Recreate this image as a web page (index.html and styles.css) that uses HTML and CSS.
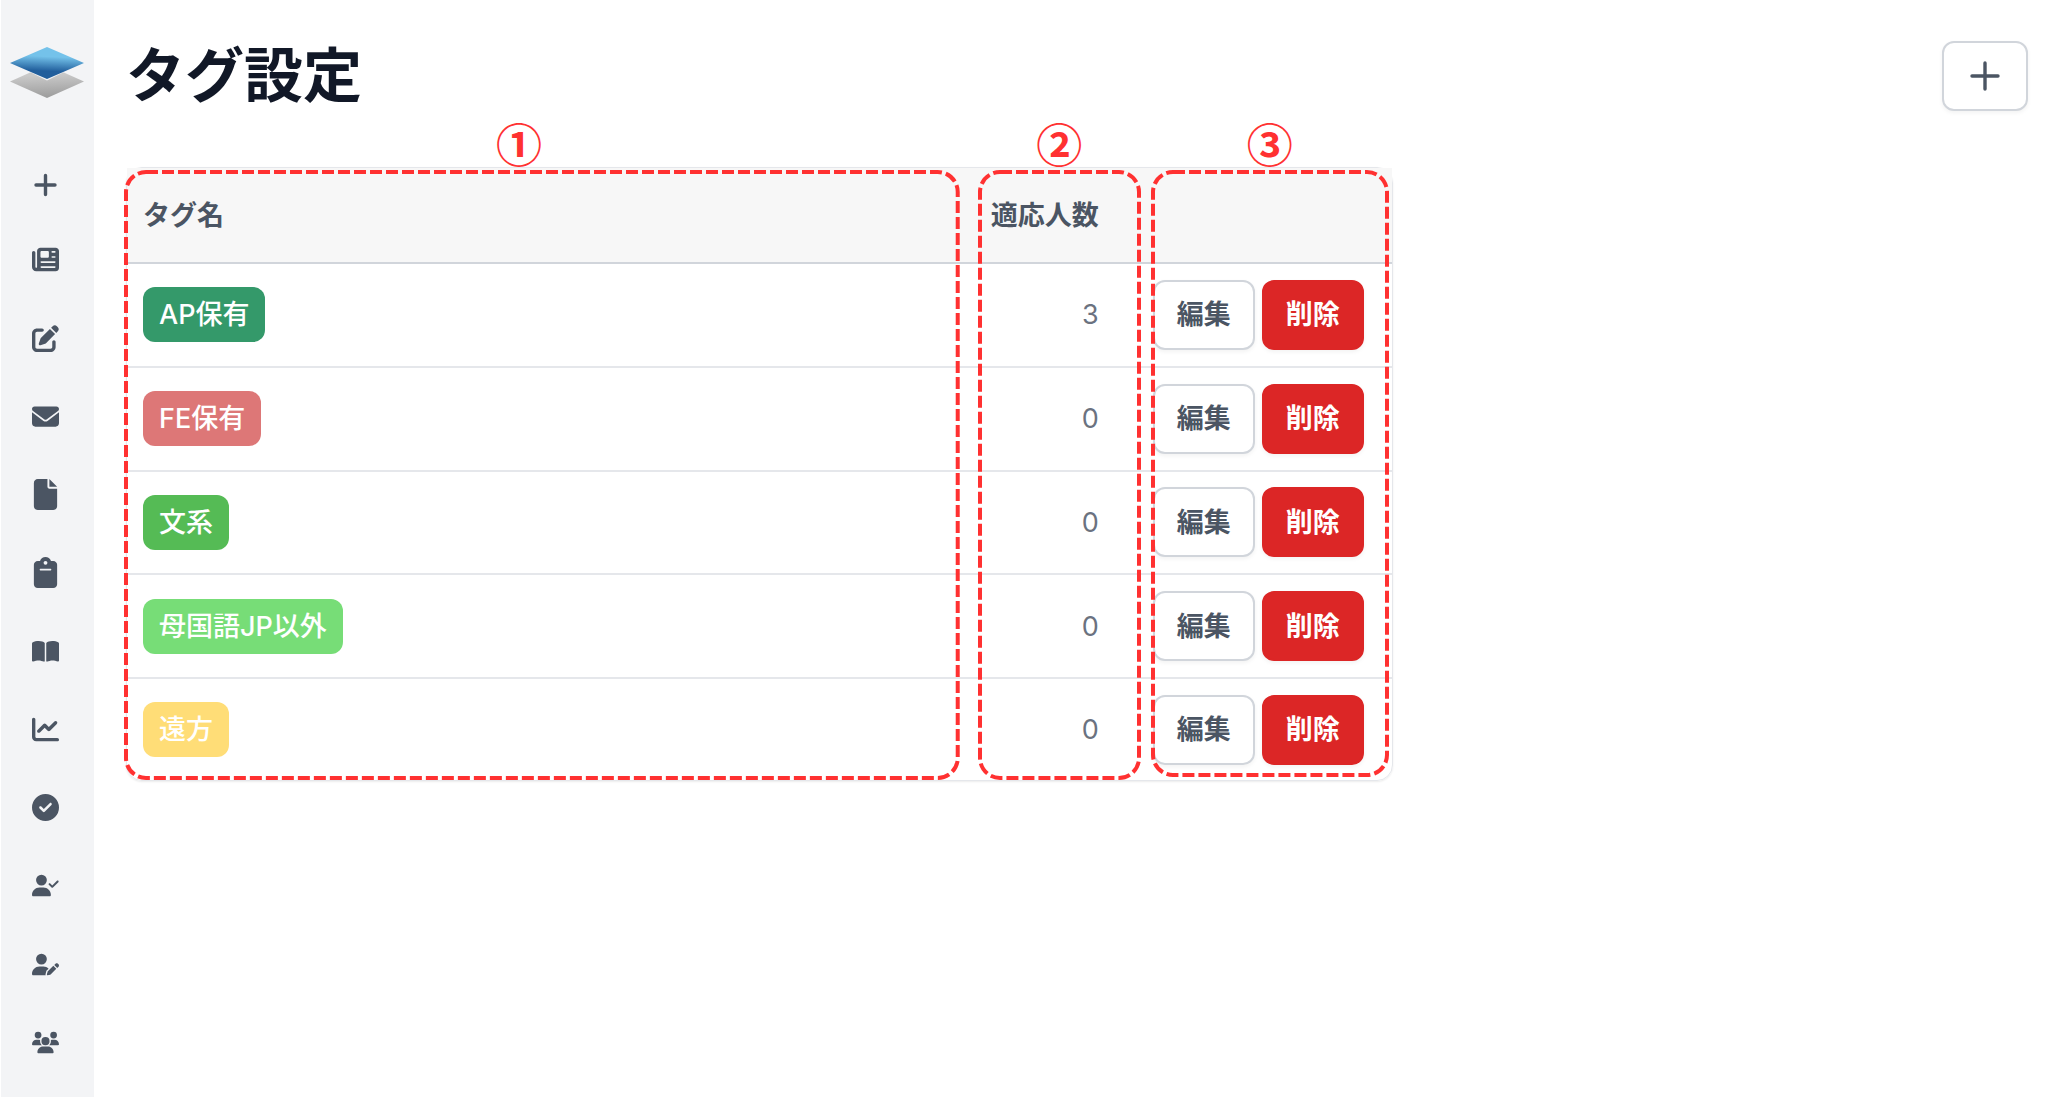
FILE: index.html
```html
<!DOCTYPE html>
<html lang="ja">
<head>
<meta charset="utf-8">
<title>タグ設定</title>
<link rel="stylesheet" href="styles.css">
</head>
<body>
<div class="app">
  <aside class="sidebar">
    <a class="logo" href="#" aria-label="ホーム">
      <svg viewBox="0 0 74 51" width="74" height="51">
        <defs>
          <linearGradient id="blue" x1="0.55" y1="0" x2="0.45" y2="1">
            <stop offset="0.3" stop-color="#74c2ea"/><stop offset="0.75" stop-color="#215e9c"/>
          </linearGradient>
          <linearGradient id="gray" x1="0.45" y1="0" x2="0.55" y2="1">
            <stop offset="0.3" stop-color="#c9c9c9"/><stop offset="1" stop-color="#9b9b9b"/>
          </linearGradient>
        </defs>
        <path fill="url(#gray)" d="M0 34.5 37 18 74 34.5 37 51z"/>
        <path fill="#f3f4f6" d="M10 20 37 33.500 64 20 50 12H24z"/>
        <path fill="url(#blue)" d="M0 16 37 0 74 16 37 32z"/>
      </svg>
    </a>
    <nav class="nav" aria-label="メニュー">
      <a href="#" class="nav-add" aria-label="追加"><svg viewBox="0 0 27 24"><path d="M13.500 2.500v19M4 12h19" fill="none" stroke="currentColor" stroke-width="3.400" stroke-linecap="round"/></svg></a>
      <a href="#" aria-label="ニュース"><svg viewBox="0 0 512 512"><path d="M96 96c0-35.3 28.700-64 64-64H448c35.300 0 64 28.700 64 64V416c0 35.300-28.700 64-64 64H80c-44.200 0-80-35.800-80-80V128c0-17.700 14.300-32 32-32s32 14.300 32 32V400c0 8.800 7.200 16 16 16s16-7.200 16-16V96zm64 24v80c0 13.300 10.700 24 24 24H296c13.300 0 24-10.700 24-24V120c0-13.300-10.700-24-24-24H184c-13.300 0-24 10.700-24 24zm208-8c0 8.800 7.200 16 16 16h48c8.800 0 16-7.200 16-16s-7.200-16-16-16H384c-8.800 0-16 7.200-16 16zm0 96c0 8.800 7.200 16 16 16h48c8.800 0 16-7.200 16-16s-7.200-16-16-16H384c-8.800 0-16 7.200-16 16zM160 304c0 8.800 7.200 16 16 16H432c8.800 0 16-7.200 16-16s-7.200-16-16-16H176c-8.800 0-16 7.200-16 16zm0 96c0 8.800 7.200 16 16 16H432c8.800 0 16-7.200 16-16s-7.200-16-16-16H176c-8.800 0-16 7.200-16 16z"/></svg></a>
      <a href="#" aria-label="編集"><svg viewBox="0 0 512 512"><path d="M471.6 21.7c-21.9-21.9-57.3-21.9-79.2 0L362.3 51.7l97.9 97.9 30.1-30.1c21.9-21.9 21.9-57.3 0-79.2L471.6 21.7zm-299.2 220c-6.1 6.1-10.8 13.6-13.5 21.9l-29.6 88.8c-2.9 8.6-.6 18.1 5.8 24.6s15.9 8.7 24.6 5.8l88.8-29.6c8.2-2.7 15.7-7.4 21.9-13.5L437.7 172.3 339.7 74.3 172.4 241.7zM96 64C43 64 0 107 0 160V416c0 53 43 96 96 96H352c53 0 96-43 96-96V320c0-17.7-14.3-32-32-32s-32 14.3-32 32v96c0 17.7-14.3 32-32 32H96c-17.7 0-32-14.3-32-32V160c0-17.7 14.3-32 32-32h96c17.7 0 32-14.3 32-32s-14.3-32-32-32H96z"/></svg></a>
      <a href="#" aria-label="メール"><svg viewBox="0 0 512 512"><path d="M48 64C21.5 64 0 85.5 0 112c0 15.1 7.1 29.3 19.2 38.4L236.8 313.6c11.4 8.5 27 8.5 38.4 0L492.8 150.4c12.1-9.1 19.2-23.3 19.2-38.4c0-26.5-21.5-48-48-48H48zM0 176V384c0 35.3 28.7 64 64 64H448c35.3 0 64-28.7 64-64V176L294.4 339.2c-22.8 17.1-54 17.1-76.8 0L0 176z"/></svg></a>
      <a href="#" aria-label="ファイル"><svg viewBox="0 0 384 512"><path d="M0 64C0 28.7 28.7 0 64 0H224V128c0 17.7 14.3 32 32 32H384V448c0 35.3-28.7 64-64 64H64c-35.3 0-64-28.7-64-64V64zm384 64H256V0L384 128z"/></svg></a>
      <a href="#" aria-label="クリップボード"><svg viewBox="0 0 384 512"><path d="M192 0c-41.8 0-77.4 26.7-90.5 64H64C28.7 64 0 92.7 0 128V448c0 35.3 28.7 64 64 64H320c35.3 0 64-28.7 64-64V128c0-35.3-28.7-64-64-64H282.5C269.4 26.7 233.8 0 192 0zm0 64a32 32 0 1 1 0 64 32 32 0 1 1 0-64zM112 192H272c8.8 0 16 7.2 16 16s-7.2 16-16 16H112c-8.8 0-16-7.2-16-16s7.2-16 16-16z"/></svg></a>
      <a href="#" aria-label="ブック"><svg viewBox="0 0 576 512"><path d="M249.6 471.5c10.8 3.8 22.4-4.1 22.4-15.5V78.6c0-4.2-1.6-8.4-5-11C247.4 52 202.4 32 144 32C93.5 32 46.3 45.3 18.1 56.1C6.8 60.5 0 71.7 0 83.8V454.1c0 11.9 12.8 20.2 24.1 16.5C55.6 460.1 105.5 448 144 448c33.9 0 79 14 105.6 23.5zm76.8 0C353 462 398.1 448 432 448c38.5 0 88.4 12.1 119.9 22.6c11.3 3.8 24.1-4.6 24.1-16.5V83.8c0-12.1-6.8-23.3-18.1-27.6C529.7 45.3 482.5 32 432 32c-58.4 0-103.4 20-123 35.6c-3.3 2.6-5 6.8-5 11V456c0 11.4 11.7 19.3 22.4 15.5z"/></svg></a>
      <a href="#" aria-label="グラフ"><svg viewBox="0 0 512 512"><path d="M64 64c0-17.7-14.3-32-32-32S0 46.3 0 64V400c0 44.2 35.8 80 80 80H480c17.7 0 32-14.3 32-32s-14.3-32-32-32H80c-8.8 0-16-7.2-16-16V64zm406.6 86.6c12.5-12.5 12.5-32.8 0-45.3s-32.8-12.5-45.3 0L320 210.7l-57.4-57.4c-12.5-12.5-32.8-12.5-45.3 0l-112 112c-12.5 12.5-12.5 32.8 0 45.3s32.8 12.5 45.3 0L240 221.3l57.4 57.4c12.5 12.5 32.8 12.5 45.3 0l128-128z"/></svg></a>
      <a href="#" aria-label="完了"><svg viewBox="0 0 512 512"><path d="M256 512A256 256 0 1 0 256 0a256 256 0 1 0 0 512zM369 209L241 337c-9.4 9.4-24.6 9.4-33.9 0l-64-64c-9.4-9.4-9.4-24.6 0-33.9s24.6-9.4 33.9 0l47 47L335 175c9.4-9.4 24.6-9.4 33.9 0s9.4 24.6 0 33.9z"/></svg></a>
      <a href="#" aria-label="ユーザー確認"><svg viewBox="0 0 640 512"><path d="M96 128a128 128 0 1 1 256 0A128 128 0 1 1 96 128zM0 482.3C0 383.8 79.8 304 178.3 304h91.4C368.2 304 448 383.8 448 482.3c0 16.4-13.3 29.7-29.7 29.7H29.7C13.3 512 0 498.7 0 482.3zM625 177L497 305c-9.4 9.4-24.6 9.4-33.9 0l-64-64c-9.4-9.4-9.4-24.6 0-33.9s24.6-9.4 33.9 0l47 47L591 143c9.4-9.4 24.6-9.4 33.9 0s9.4 24.6 0 33.9z"/></svg></a>
      <a href="#" aria-label="ユーザー編集"><svg viewBox="0 0 640 512"><path d="M224 256A128 128 0 1 0 224 0a128 128 0 1 0 0 256zm-45.7 48C79.8 304 0 383.8 0 482.3C0 498.7 13.3 512 29.7 512H322.8c-3.1-8.8-3.7-18.4-1.4-27.8l15-60.1c2.8-11.3 8.6-21.5 16.8-29.7l40.3-40.3c-32.1-31-75.7-50.1-123.9-50.1H178.3zm435.5-68.3c-15.6-15.6-40.9-15.6-56.6 0l-29.4 29.4 71 71 29.4-29.4c15.6-15.6 15.6-40.9 0-56.6l-14.4-14.4zM375.9 417c-4.1 4.1-7 9.2-8.4 14.9l-15 60.1c-1.4 5.5 .2 11.2 4.2 15.2s9.7 5.6 15.2 4.2l60.1-15c5.6-1.4 10.8-4.3 14.9-8.4L576.1 358.7l-71-71L375.9 417z"/></svg></a>
      <a href="#" aria-label="グループ"><svg viewBox="0 0 640 512"><path d="M144 0a80 80 0 1 1 0 160A80 80 0 1 1 144 0zM512 0a80 80 0 1 1 0 160A80 80 0 1 1 512 0zM0 298.7C0 239.8 47.8 192 106.7 192h42.7c15.9 0 31 3.5 44.6 9.7c-1.3 7.2-1.9 14.7-1.9 22.3c0 38.2 16.8 72.5 43.3 96c-.2 0-.4 0-.7 0H21.3C9.6 320 0 310.4 0 298.7zM405.3 320c-.2 0-.4 0-.7 0c26.6-23.5 43.3-57.8 43.3-96c0-7.6-.7-15-1.9-22.3c13.6-6.3 28.7-9.7 44.6-9.7h42.7C592.2 192 640 239.8 640 298.7c0 11.8-9.6 21.3-21.3 21.3H405.3zM224 224a96 96 0 1 1 192 0 96 96 0 1 1 -192 0zM128 485.3C128 411.7 187.7 352 261.3 352H378.7C452.3 352 512 411.7 512 485.3c0 14.7-11.9 26.7-26.7 26.7H154.7c-14.7 0-26.7-11.9-26.7-26.7z"/></svg></a>
    </nav>
  </aside>

  <main class="main">
    <header class="page-head">
      <h1 class="title">タグ設定</h1>
      <button type="button" class="btn btn-add" aria-label="タグを追加"><svg viewBox="0 0 30 30" width="30" height="30"><path d="M15 2v26M2 15h26" fill="none" stroke="currentColor" stroke-width="3.400" stroke-linecap="round"/></svg></button>
    </header>

    <div class="table-wrap">
      <table class="tags">
        <thead>
          <tr><th class="col-name" scope="col">タグ名</th><th class="col-count" scope="col">適応人数</th><td class="col-actions"></td></tr>
        </thead>
        <tbody>
          <tr><td class="col-name"><span class="tag tag-ap">AP保有</span></td><td class="col-count">3</td><td class="col-actions"><div class="actions"><button type="button" class="btn">編集</button><button type="button" class="btn btn-danger">削除</button></div></td></tr>
          <tr><td class="col-name"><span class="tag tag-fe">FE保有</span></td><td class="col-count">0</td><td class="col-actions"><div class="actions"><button type="button" class="btn">編集</button><button type="button" class="btn btn-danger">削除</button></div></td></tr>
          <tr><td class="col-name"><span class="tag tag-arts">文系</span></td><td class="col-count">0</td><td class="col-actions"><div class="actions"><button type="button" class="btn">編集</button><button type="button" class="btn btn-danger">削除</button></div></td></tr>
          <tr><td class="col-name"><span class="tag tag-lang">母国語JP以外</span></td><td class="col-count">0</td><td class="col-actions"><div class="actions"><button type="button" class="btn">編集</button><button type="button" class="btn btn-danger">削除</button></div></td></tr>
          <tr><td class="col-name"><span class="tag tag-far">遠方</span></td><td class="col-count">0</td><td class="col-actions"><div class="actions"><button type="button" class="btn">編集</button><button type="button" class="btn btn-danger">削除</button></div></td></tr>
        </tbody>
      </table>

      <div class="note note-name"><span class="note-num">①</span><svg class="note-box"><rect x="2" y="2" rx="20"/></svg></div>
      <div class="note note-count"><span class="note-num">②</span><svg class="note-box"><rect x="2" y="2" rx="20"/></svg></div>
      <div class="note note-actions"><span class="note-num">③</span><svg class="note-box"><rect x="2" y="2" rx="20"/></svg></div>
    </div>
  </main>
</div>
</body>
</html>
```
FILE: styles.css
```css
* {
  box-sizing: border-box;
}

body {
  margin: 0;
  background: #fff;
  color: #4b5563;
  font-family: Inter, "Noto Sans CJK JP", sans-serif;
  font-size: 27px;
  line-height: 39px;
}

.app {
  display: flex;
  min-height: 100vh;
}

/* Sidebar */
.sidebar {
  display: flex;
  flex-direction: column;
  align-items: center;
  flex: none;
  width: 94px;
  padding: 47px 2px 39px 0;
  border-left: 1px solid #fff;
  background: #f3f4f6;
}

.logo {
  display: block;
  height: 51px;
  margin-bottom: 75px;
}

.logo svg {
  display: block;
}

.nav {
  display: flex;
  flex: 1;
  flex-direction: column;
  justify-content: space-between;
  padding-right: 2px;
}

.nav a {
  display: block;
  width: 27px;
  height: 31px;
  color: #4b5563;
}

.nav .nav-add {
  height: 24px;
}

.nav svg {
  display: block;
  width: 100%;
  height: 100%;
  fill: currentColor;
}

/* Page */
.main {
  flex: 1;
  min-width: 0;
  padding: 41px 20px 40px 32px;
}

.page-head {
  display: flex;
  align-items: center;
  justify-content: space-between;
  height: 70px;
  margin-bottom: 56px;
}

.title {
  margin: 0;
  color: #111827;
  font-size: 59px;
  line-height: 70px;
  font-weight: 700;
}

.btn {
  height: 70px;
  padding: 0 22px;
  border: 2px solid #d1d5db;
  border-radius: 12px;
  background: #fff;
  box-shadow: 0 2px 4px rgba(0, 0, 0, 0.05);
  color: #4b5563;
  font: inherit;
  font-weight: 700;
}

.btn-danger {
  border-color: #dc2626;
  background: #dc2626;
  color: #fff;
}

.btn-add {
  display: flex;
  align-items: center;
  justify-content: center;
  width: 86px;
  padding: 0;
}

/* Table */
.table-wrap {
  position: relative;
  width: 66.6%;
  border: 1px solid #e5e7eb;
  border-radius: 16px;
  box-shadow: 0 1px 2px rgba(0, 0, 0, 0.08);
}

.tags {
  width: 100%;
  height: 612px;
  border-collapse: separate;
  border-spacing: 0;
}

.tags th,
.tags td {
  padding: 0;
  border-bottom: 2px solid #e5e7eb;
  text-align: left;
}

.tags thead th,
.tags thead td {
  height: 96px;
  border-bottom: 2px solid #d1d5db;
  background: #f7f7f7;
  font-weight: 700;
}

.tags tbody tr:last-child td {
  border-bottom: 0;
}

.tags .col-name {
  padding-left: 16px;
}

.tags .col-count {
  width: 160px;
  padding-right: 26px;
  text-align: right;
}

.tags tbody .col-count {
  color: #6b7280;
}

.tags .col-actions {
  width: 267px;
  padding: 0 28px;
}

.actions {
  display: flex;
  justify-content: space-between;
}

.tag {
  display: inline-block;
  padding: 8px 16px;
  border-radius: 12px;
  color: #fff;
  font-weight: 500;
  vertical-align: middle;
}

.tag-ap { background: #34996a; }
.tag-fe { background: #dd7777; }
.tag-arts { background: #55bb55; }
.tag-lang { background: #77dd77; }
.tag-far { background: #ffdd77; }

/* Numbered outlines laid over the table columns */
.note {
  position: absolute;
  top: 2px;
  bottom: 0;
  pointer-events: none;
}

.note-name {
  left: -3px;
  right: 432px;
}

.note-count {
  right: 251px;
  width: 163px;
}

.note-actions {
  right: 3px;
  bottom: 3px;
  width: 238px;
}

.note-box {
  display: block;
  width: 100%;
  height: 100%;
  overflow: visible;
}

.note-box rect {
  width: calc(100% - 4px);
  height: calc(100% - 4px);
  fill: none;
  stroke: #ff3131;
  stroke-width: 4px;
  stroke-dasharray: 12 4;
}

.note-num {
  position: absolute;
  bottom: 100%;
  left: 0;
  width: 100%;
  color: #ff3131;
  font-family: "Noto Sans CJK JP", sans-serif;
  font-size: 46px;
  line-height: 56px;
  font-weight: 700;
  text-align: center;
}

.note-name .note-num {
  width: 790px;
}
```
